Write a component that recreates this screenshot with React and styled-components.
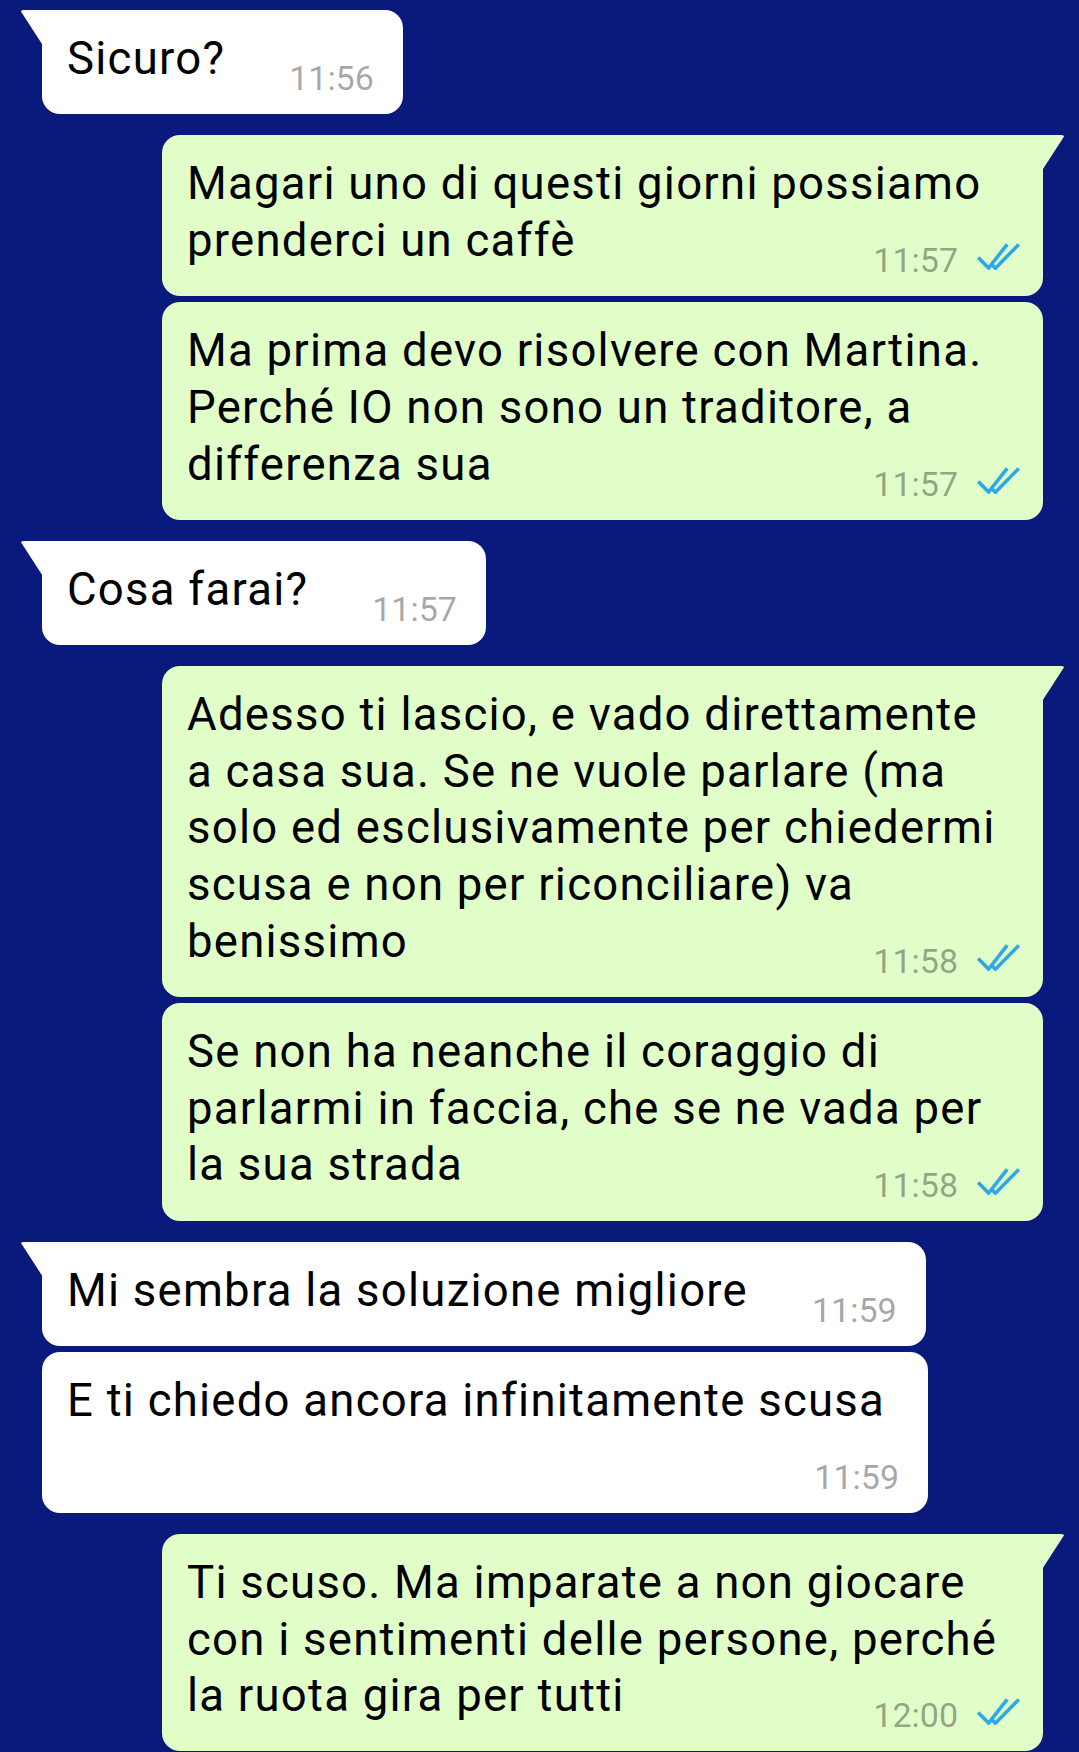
import React from 'react';
import styled, { createGlobalStyle, css } from 'styled-components';

const GlobalStyle = createGlobalStyle`
  html, body {
    margin: 0;
    padding: 0;
    overflow: hidden;
    background: #0a1a7c;
  }
  body {
    font-family: Roboto, "Noto Sans", "Liberation Sans", sans-serif;
    -webkit-font-smoothing: antialiased;
  }
`;

const Screen = styled.main`
  box-sizing: border-box;
  width: 1079px;
  height: 1752px;
  overflow: hidden;
  background: #0a1a7c;
  display: flex;
  flex-direction: column;
  padding-top: 10px;
`;

const Row = styled.div`
  display: flex;
  justify-content: ${(p) => (p.$out ? 'flex-end' : 'flex-start')};
  padding: ${(p) => (p.$out ? '0 36px 0 0' : '0 0 0 42px')};
  margin-top: ${(p) => (p.$first ? '21px' : '6.5px')};
  &:first-child {
    margin-top: 0;
  }
`;

const inTail = css`
  border-top-left-radius: 0;
  &::before {
    content: '';
    position: absolute;
    top: 0;
    left: -22px;
    width: 22px;
    height: 34px;
    background: inherit;
    clip-path: polygon(0 0, 100% 0, 100% 100%);
    border-top-left-radius: 4px;
  }
`;

const outTail = css`
  border-top-right-radius: 0;
  &::before {
    content: '';
    position: absolute;
    top: 0;
    right: -22px;
    width: 22px;
    height: 34px;
    background: inherit;
    clip-path: polygon(0 0, 100% 0, 0 100%);
    border-top-right-radius: 4px;
  }
`;

const Bubble = styled.div`
  position: relative;
  display: flow-root;
  box-sizing: border-box;
  background: ${(p) => (p.$out ? '#e1fdc8' : '#ffffff')};
  border-radius: 18px;
  padding: 21px ${(p) => (p.$out ? '23px' : '29px')} 19px 25px;
  ${(p) => (p.$out ? css`width: 881px;` : css`max-width: 886px;`)}
  ${(p) => p.$tail && (p.$out ? outTail : inTail)}
`;

const Text = styled.div`
  font-size: 45.5px;
  line-height: 56.67px;
  letter-spacing: 1.25px;
  color: #000;
`;

const Spacer = styled.span`
  display: inline-block;
  height: 0;
  overflow: hidden;
  visibility: hidden;
  white-space: nowrap;
  font-size: 34px;
  letter-spacing: normal;
  margin-left: ${(p) => (p.$out ? '40px' : '64px')};
  vertical-align: baseline;
`;

const Meta = styled.div`
  float: right;
  margin-top: -26.6px;
  font-size: 34px;
  line-height: 34px;
  white-space: nowrap;
  color: rgba(0, 0, 0, 0.36);
`;

const Ticks = styled.svg`
  width: 43px;
  height: 27px;
  margin-left: 19px;
  vertical-align: 2px;
`;

const DoubleCheck = () => (
  <Ticks viewBox="0 0 43 27" fill="none">
    <path d="M1.2 14.6 L11.6 25 L30.2 1.4" stroke="#2fa9e6" strokeWidth="3.6" />
    <path d="M14.8 21.4 L18.4 25.2 L41.8 1.4" stroke="#2fa9e6" strokeWidth="3.6" />
  </Ticks>
);

const MetaContent = ({ time, out }) => (
  <>
    {time}
    {out && <DoubleCheck />}
  </>
);

const messages = [
  { out: false, first: true, lines: ['Sicuro?'], time: '11:56' },
  { out: true, first: true, lines: ['Magari uno di questi giorni possiamo', 'prenderci un caffè'], time: '11:57' },
  {
    out: true,
    first: false,
    lines: ['Ma prima devo risolvere con Martina.', 'Perché IO non sono un traditore, a', 'differenza sua'],
    time: '11:57',
  },
  { out: false, first: true, lines: ['Cosa farai?'], time: '11:57' },
  {
    out: true,
    first: true,
    lines: [
      'Adesso ti lascio, e vado direttamente',
      'a casa sua. Se ne vuole parlare (ma',
      'solo ed esclusivamente per chiedermi',
      'scusa e non per riconciliare) va',
      'benissimo',
    ],
    time: '11:58',
  },
  {
    out: true,
    first: false,
    lines: ['Se non ha neanche il coraggio di', 'parlarmi in faccia, che se ne vada per', 'la sua strada'],
    time: '11:58',
  },
  { out: false, first: true, lines: ['Mi sembra la soluzione migliore'], time: '11:59' },
  { out: false, first: false, lines: ['E ti chiedo ancora infinitamente scusa'], time: '11:59' },
  {
    out: true,
    first: true,
    lines: ['Ti scuso. Ma imparate a non giocare', 'con i sentimenti delle persone, perché', 'la ruota gira per tutti'],
    time: '12:00',
  },
];

const Message = ({ m }) => (
  <Row $out={m.out} $first={m.first}>
    <Bubble $out={m.out} $tail={m.first}>
      <Text>
        {m.lines.map((l, i) => (
          <React.Fragment key={i}>
            {i > 0 && <br />}
            {l}
          </React.Fragment>
        ))}
        <Spacer $out={m.out}>
          <MetaContent time={m.time} out={m.out} />
        </Spacer>
      </Text>
      <Meta>
        <MetaContent time={m.time} out={m.out} />
      </Meta>
    </Bubble>
  </Row>
);

export default function App() {
  return (
    <>
      <GlobalStyle />
      <Screen>
        {messages.map((m, i) => (
          <Message key={i} m={m} />
        ))}
      </Screen>
    </>
  );
}
